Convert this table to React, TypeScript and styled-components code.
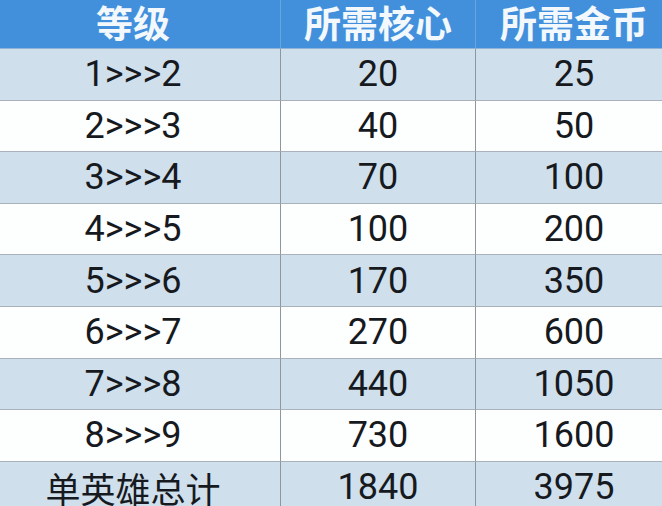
import React from "react";
import styled, { createGlobalStyle } from "styled-components";

const GlobalStyle = createGlobalStyle`
  html, body {
    margin: 0;
    padding: 0;
    background: #ffffff;
    overflow: hidden;
  }
`;

const Page = styled.div`
  width: 662px;
  height: 506px;
  overflow: hidden;
`;

const Table = styled.div`
  display: grid;
  grid-template-columns: 295px 195px 196px;
  margin-left: -14px;
  width: 686px;
  font-family: Roboto, "Noto Sans CJK SC", sans-serif;
`;

const HeadCell = styled.div<{ $last?: boolean }>`
  height: 49px;
  display: flex;
  align-items: center;
  justify-content: center;
  padding-bottom: 3px;
  box-sizing: border-box;
  background: #4290dc;
  color: #f3f8fd;
  font-family: "Noto Sans CJK SC", sans-serif;
  font-weight: 700;
  font-size: 37px;
  line-height: 1;
  border-right: ${(p) => (p.$last ? "none" : "1px solid #6aa5dc")};
  border-bottom: 1px solid #8fb4d6;
`;

const Cell = styled.div<{ $shade: boolean; $last?: boolean; $cjk?: boolean }>`
  height: 51.6px;
  box-sizing: border-box;
  display: flex;
  align-items: center;
  justify-content: center;
  background: ${(p) => (p.$shade ? "#cfdfec" : "#fdfefe")};
  color: #161a1e;
  font-family: ${(p) =>
    p.$cjk ? `"Noto Sans CJK SC", sans-serif` : `Roboto, sans-serif`};
  font-size: ${(p) => (p.$cjk ? "35px" : "36px")};
  line-height: 1;
  border-right: ${(p) => (p.$last ? "none" : "1px solid #8f979e")};
  border-bottom: 1px solid #a9b2ba;
`;

const rows: [string, string, string][] = [
  ["1>>>2", "20", "25"],
  ["2>>>3", "40", "50"],
  ["3>>>4", "70", "100"],
  ["4>>>5", "100", "200"],
  ["5>>>6", "170", "350"],
  ["6>>>7", "270", "600"],
  ["7>>>8", "440", "1050"],
  ["8>>>9", "730", "1600"],
  ["单英雄总计", "1840", "3975"],
];

export default function App() {
  return (
    <Page>
      <GlobalStyle />
      <Table>
        <HeadCell>等级</HeadCell>
        <HeadCell>所需核心</HeadCell>
        <HeadCell $last>所需金币</HeadCell>
        {rows.map((r, i) => {
          const shade = i % 2 === 0;
          return (
            <React.Fragment key={r[0]}>
              <Cell $shade={shade} $cjk={i === rows.length - 1}>
                {r[0]}
              </Cell>
              <Cell $shade={shade}>{r[1]}</Cell>
              <Cell $shade={shade} $last>
                {r[2]}
              </Cell>
            </React.Fragment>
          );
        })}
      </Table>
    </Page>
  );
}
